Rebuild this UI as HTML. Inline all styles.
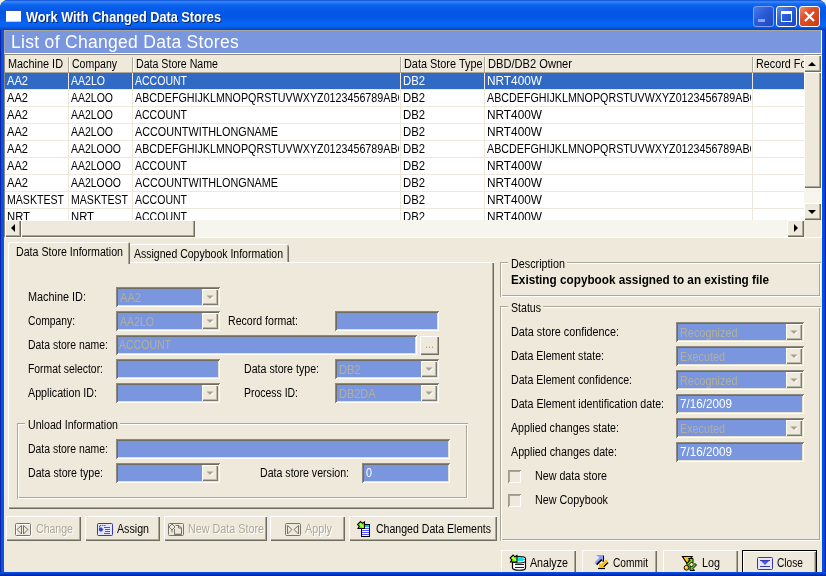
<!DOCTYPE html><html><head><meta charset="utf-8"><title>Work With Changed Data Stores</title><style>
html,body{margin:0;padding:0;}
body{width:826px;height:576px;overflow:hidden;position:relative;background:#EEE9DB;font-family:"Liberation Sans", sans-serif;font-size:11px;}
#w{position:absolute;left:0;top:0;width:826px;height:576px;overflow:hidden;will-change:transform;}
#w div,#w span,#w svg{position:absolute;box-sizing:border-box;}
.t{white-space:pre;line-height:1.15;transform-origin:0 0;}
</style></head><body><div id="w">
<div style="left:0px;top:0px;width:826px;height:576px;background:#f2efe4;"></div>
<div style="left:0px;top:0px;width:826px;height:576px;background:#0a26b0;border-radius:8px 8px 0 0;"></div>
<div style="left:1px;top:0px;width:824px;height:576px;background:linear-gradient(to right,#0d4fe0 0px,#0855e4 3px,#0855e4 821px,#0a3fd0 824px);border-radius:8px 8px 0 0;"></div>
<div style="left:0px;top:0px;width:826px;height:30px;background:linear-gradient(to bottom,#0b48d0 0%,#3b8df8 6%,#1a6ef2 11%,#0860ec 20%,#0457e6 40%,#0458e6 60%,#0864f2 75%,#0763f0 88%,#0450d8 95%,#0340c0 100%);border-radius:8px 8px 0 0;"></div>
<div style="left:4px;top:30px;width:818px;height:542px;background:#EEE9DB;"></div>
<div style="left:6px;top:10px;width:15px;height:12px;background:#fff;border-top:1px solid #2a50c0;border-bottom:1px solid #b8c8f0;"></div>
<span class="t" style="left:26px;top:9px;font-size:14px;font-weight:bold;color:#fff;transform:scaleX(0.9099);text-shadow:1px 1px 0 #0a246a;">Work With Changed Data Stores</span>
<div style="left:753px;top:6px;width:21px;height:21px;background:linear-gradient(135deg,#4a7be6 0%,#2a5ad8 45%,#2148c2 100%);border:1px solid #7f9ff0;border-radius:3px;"></div>
<div style="left:776px;top:6px;width:21px;height:21px;background:linear-gradient(135deg,#5a8cf0 0%,#2a5ddb 45%,#1f45c0 100%);border:1px solid #fff;border-radius:3px;"></div>
<div style="left:799px;top:6px;width:21px;height:21px;background:linear-gradient(135deg,#ee9070 0%,#e2502b 35%,#cc3a10 100%);border:1px solid #fff;border-radius:3px;"></div>
<svg style="left:753px;top:6px" width="21" height="21"><rect x="5" y="13" width="7" height="3" fill="#8aa3ee"/></svg>
<svg style="left:776px;top:6px" width="21" height="21"><path d="M5 5h11v11h-11z M6 8v7h9v-7z" fill="#fff" fill-rule="evenodd"/></svg>
<svg style="left:799px;top:6px" width="21" height="21"><path d="M6 6l9 9M15 6l-9 9" stroke="#fff" stroke-width="2.2" fill="none"/></svg>
<div style="left:4px;top:30px;width:818px;height:24px;background:#7A96DF;border-top:1px solid #aca899;border-bottom:1px solid #fff;border-left:1px solid #aca899;border-right:1px solid #fff;"></div>
<span class="t" style="left:11px;top:32px;font-size:17.5px;color:#fff;letter-spacing:0.302px;">List of Changed Data Stores</span>
<div style="left:4px;top:54px;width:818px;height:184px;background:#fff;border-top:1px solid #8d8a7c;border-left:1px solid #8d8a7c;border-right:1px solid #fff;border-bottom:1px solid #fff;"></div>
<div style="left:5px;top:55px;width:799px;height:18px;background:#EEE9DB;border-bottom:1px solid #aca899;"></div>
<span class="t" style="left:8px;top:58px;font-size:12px;transform:scaleX(0.9060);">Machine ID</span>
<div style="left:68px;top:57px;width:2px;height:15px;border-left:1px solid #aca899;border-right:1px solid #fff;"></div>
<span class="t" style="left:72px;top:58px;font-size:12px;transform:scaleX(0.8762);">Company</span>
<div style="left:132px;top:57px;width:2px;height:15px;border-left:1px solid #aca899;border-right:1px solid #fff;"></div>
<span class="t" style="left:136px;top:58px;font-size:12px;transform:scaleX(0.8844);">Data Store Name</span>
<div style="left:400px;top:57px;width:2px;height:15px;border-left:1px solid #aca899;border-right:1px solid #fff;"></div>
<span class="t" style="left:404px;top:58px;font-size:12px;transform:scaleX(0.9075);">Data Store Type</span>
<div style="left:484px;top:57px;width:2px;height:15px;border-left:1px solid #aca899;border-right:1px solid #fff;"></div>
<span class="t" style="left:488px;top:58px;font-size:12px;transform:scaleX(0.9261);">DBD/DB2 Owner</span>
<div style="left:752px;top:57px;width:2px;height:15px;border-left:1px solid #aca899;border-right:1px solid #fff;"></div>
<div style="left:756px;top:58px;width:48px;height:14px;overflow:hidden;"><span class="t" style="left:0px;top:0px;font-size:12px;transform:scaleX(0.8996);">Record Format</span></div>
<div style="left:5px;top:73px;width:799px;height:16px;background:#316AC5;"></div>
<div style="left:5px;top:89px;width:799px;height:1px;background:#ede8db;"></div>
<div style="left:7px;top:74px;width:60px;height:16px;overflow:hidden;"><span class="t" style="left:0px;top:0px;font-size:12.3px;color:#fff;transform:scaleX(0.9032);">AA2</span></div>
<div style="left:71px;top:74px;width:60px;height:16px;overflow:hidden;"><span class="t" style="left:0px;top:0px;font-size:12.3px;color:#fff;transform:scaleX(0.8574);">AA2LO</span></div>
<div style="left:135px;top:74px;width:264px;height:16px;overflow:hidden;"><span class="t" style="left:0px;top:0px;font-size:12.3px;color:#fff;transform:scaleX(0.8551);">ACCOUNT</span></div>
<div style="left:403px;top:74px;width:80px;height:16px;overflow:hidden;"><span class="t" style="left:0px;top:0px;font-size:12.3px;color:#fff;transform:scaleX(0.9197);">DB2</span></div>
<div style="left:487px;top:74px;width:264px;height:16px;overflow:hidden;"><span class="t" style="left:0px;top:0px;font-size:12.3px;color:#fff;transform:scaleX(0.9617);">NRT400W</span></div>
<div style="left:5px;top:106px;width:799px;height:1px;background:#ede8db;"></div>
<div style="left:7px;top:91px;width:60px;height:16px;overflow:hidden;"><span class="t" style="left:0px;top:0px;font-size:12.3px;transform:scaleX(0.9032);">AA2</span></div>
<div style="left:71px;top:91px;width:60px;height:16px;overflow:hidden;"><span class="t" style="left:0px;top:0px;font-size:12.3px;transform:scaleX(0.8533);">AA2LOO</span></div>
<div style="left:135px;top:91px;width:264px;height:16px;overflow:hidden;"><span class="t" style="left:0px;top:0px;font-size:12.3px;transform:scaleX(0.8711);">ABCDEFGHIJKLMNOPQRSTUVWXYZ0123456789ABCD</span></div>
<div style="left:403px;top:91px;width:80px;height:16px;overflow:hidden;"><span class="t" style="left:0px;top:0px;font-size:12.3px;transform:scaleX(0.9197);">DB2</span></div>
<div style="left:487px;top:91px;width:264px;height:16px;overflow:hidden;"><span class="t" style="left:0px;top:0px;font-size:12.3px;transform:scaleX(0.8711);">ABCDEFGHIJKLMNOPQRSTUVWXYZ0123456789ABCD</span></div>
<div style="left:5px;top:123px;width:799px;height:1px;background:#ede8db;"></div>
<div style="left:7px;top:108px;width:60px;height:16px;overflow:hidden;"><span class="t" style="left:0px;top:0px;font-size:12.3px;transform:scaleX(0.9032);">AA2</span></div>
<div style="left:71px;top:108px;width:60px;height:16px;overflow:hidden;"><span class="t" style="left:0px;top:0px;font-size:12.3px;transform:scaleX(0.8533);">AA2LOO</span></div>
<div style="left:135px;top:108px;width:264px;height:16px;overflow:hidden;"><span class="t" style="left:0px;top:0px;font-size:12.3px;transform:scaleX(0.8551);">ACCOUNT</span></div>
<div style="left:403px;top:108px;width:80px;height:16px;overflow:hidden;"><span class="t" style="left:0px;top:0px;font-size:12.3px;transform:scaleX(0.9197);">DB2</span></div>
<div style="left:487px;top:108px;width:264px;height:16px;overflow:hidden;"><span class="t" style="left:0px;top:0px;font-size:12.3px;transform:scaleX(0.9617);">NRT400W</span></div>
<div style="left:5px;top:140px;width:799px;height:1px;background:#ede8db;"></div>
<div style="left:7px;top:125px;width:60px;height:16px;overflow:hidden;"><span class="t" style="left:0px;top:0px;font-size:12.3px;transform:scaleX(0.9032);">AA2</span></div>
<div style="left:71px;top:125px;width:60px;height:16px;overflow:hidden;"><span class="t" style="left:0px;top:0px;font-size:12.3px;transform:scaleX(0.8533);">AA2LOO</span></div>
<div style="left:135px;top:125px;width:264px;height:16px;overflow:hidden;"><span class="t" style="left:0px;top:0px;font-size:12.3px;transform:scaleX(0.8795);">ACCOUNTWITHLONGNAME</span></div>
<div style="left:403px;top:125px;width:80px;height:16px;overflow:hidden;"><span class="t" style="left:0px;top:0px;font-size:12.3px;transform:scaleX(0.9197);">DB2</span></div>
<div style="left:487px;top:125px;width:264px;height:16px;overflow:hidden;"><span class="t" style="left:0px;top:0px;font-size:12.3px;transform:scaleX(0.9617);">NRT400W</span></div>
<div style="left:5px;top:157px;width:799px;height:1px;background:#ede8db;"></div>
<div style="left:7px;top:142px;width:60px;height:16px;overflow:hidden;"><span class="t" style="left:0px;top:0px;font-size:12.3px;transform:scaleX(0.9032);">AA2</span></div>
<div style="left:71px;top:142px;width:60px;height:16px;overflow:hidden;"><span class="t" style="left:0px;top:0px;font-size:12.3px;transform:scaleX(0.8506);">AA2LOOO</span></div>
<div style="left:135px;top:142px;width:264px;height:16px;overflow:hidden;"><span class="t" style="left:0px;top:0px;font-size:12.3px;transform:scaleX(0.8711);">ABCDEFGHIJKLMNOPQRSTUVWXYZ0123456789ABCD</span></div>
<div style="left:403px;top:142px;width:80px;height:16px;overflow:hidden;"><span class="t" style="left:0px;top:0px;font-size:12.3px;transform:scaleX(0.9197);">DB2</span></div>
<div style="left:487px;top:142px;width:264px;height:16px;overflow:hidden;"><span class="t" style="left:0px;top:0px;font-size:12.3px;transform:scaleX(0.8711);">ABCDEFGHIJKLMNOPQRSTUVWXYZ0123456789ABCD</span></div>
<div style="left:5px;top:174px;width:799px;height:1px;background:#ede8db;"></div>
<div style="left:7px;top:159px;width:60px;height:16px;overflow:hidden;"><span class="t" style="left:0px;top:0px;font-size:12.3px;transform:scaleX(0.9032);">AA2</span></div>
<div style="left:71px;top:159px;width:60px;height:16px;overflow:hidden;"><span class="t" style="left:0px;top:0px;font-size:12.3px;transform:scaleX(0.8506);">AA2LOOO</span></div>
<div style="left:135px;top:159px;width:264px;height:16px;overflow:hidden;"><span class="t" style="left:0px;top:0px;font-size:12.3px;transform:scaleX(0.8551);">ACCOUNT</span></div>
<div style="left:403px;top:159px;width:80px;height:16px;overflow:hidden;"><span class="t" style="left:0px;top:0px;font-size:12.3px;transform:scaleX(0.9197);">DB2</span></div>
<div style="left:487px;top:159px;width:264px;height:16px;overflow:hidden;"><span class="t" style="left:0px;top:0px;font-size:12.3px;transform:scaleX(0.9617);">NRT400W</span></div>
<div style="left:5px;top:191px;width:799px;height:1px;background:#ede8db;"></div>
<div style="left:7px;top:176px;width:60px;height:16px;overflow:hidden;"><span class="t" style="left:0px;top:0px;font-size:12.3px;transform:scaleX(0.9032);">AA2</span></div>
<div style="left:71px;top:176px;width:60px;height:16px;overflow:hidden;"><span class="t" style="left:0px;top:0px;font-size:12.3px;transform:scaleX(0.8506);">AA2LOOO</span></div>
<div style="left:135px;top:176px;width:264px;height:16px;overflow:hidden;"><span class="t" style="left:0px;top:0px;font-size:12.3px;transform:scaleX(0.8795);">ACCOUNTWITHLONGNAME</span></div>
<div style="left:403px;top:176px;width:80px;height:16px;overflow:hidden;"><span class="t" style="left:0px;top:0px;font-size:12.3px;transform:scaleX(0.9197);">DB2</span></div>
<div style="left:487px;top:176px;width:264px;height:16px;overflow:hidden;"><span class="t" style="left:0px;top:0px;font-size:12.3px;transform:scaleX(0.9617);">NRT400W</span></div>
<div style="left:5px;top:208px;width:799px;height:1px;background:#ede8db;"></div>
<div style="left:7px;top:193px;width:60px;height:16px;overflow:hidden;"><span class="t" style="left:0px;top:0px;font-size:12.3px;transform:scaleX(0.8600);">MASKTEST</span></div>
<div style="left:71px;top:193px;width:60px;height:16px;overflow:hidden;"><span class="t" style="left:0px;top:0px;font-size:12.3px;transform:scaleX(0.8600);">MASKTEST</span></div>
<div style="left:135px;top:193px;width:264px;height:16px;overflow:hidden;"><span class="t" style="left:0px;top:0px;font-size:12.3px;transform:scaleX(0.8551);">ACCOUNT</span></div>
<div style="left:403px;top:193px;width:80px;height:16px;overflow:hidden;"><span class="t" style="left:0px;top:0px;font-size:12.3px;transform:scaleX(0.9197);">DB2</span></div>
<div style="left:487px;top:193px;width:264px;height:16px;overflow:hidden;"><span class="t" style="left:0px;top:0px;font-size:12.3px;transform:scaleX(0.9617);">NRT400W</span></div>
<div style="left:7px;top:210px;width:60px;height:10px;overflow:hidden;"><span class="t" style="left:0px;top:0px;font-size:12.3px;transform:scaleX(0.9177);">NRT</span></div>
<div style="left:71px;top:210px;width:60px;height:10px;overflow:hidden;"><span class="t" style="left:0px;top:0px;font-size:12.3px;transform:scaleX(0.9177);">NRT</span></div>
<div style="left:135px;top:210px;width:264px;height:10px;overflow:hidden;"><span class="t" style="left:0px;top:0px;font-size:12.3px;transform:scaleX(0.8551);">ACCOUNT</span></div>
<div style="left:403px;top:210px;width:80px;height:10px;overflow:hidden;"><span class="t" style="left:0px;top:0px;font-size:12.3px;transform:scaleX(0.9197);">DB2</span></div>
<div style="left:487px;top:210px;width:264px;height:10px;overflow:hidden;"><span class="t" style="left:0px;top:0px;font-size:12.3px;transform:scaleX(0.9617);">NRT400W</span></div>
<div style="left:68px;top:73px;width:1px;height:147px;background:#ede8db;"></div>
<div style="left:132px;top:73px;width:1px;height:147px;background:#ede8db;"></div>
<div style="left:400px;top:73px;width:1px;height:147px;background:#ede8db;"></div>
<div style="left:484px;top:73px;width:1px;height:147px;background:#ede8db;"></div>
<div style="left:752px;top:73px;width:1px;height:147px;background:#ede8db;"></div>
<div style="left:804px;top:55px;width:17px;height:165px;background:#f6f5ee;"></div>
<div style="left:804px;top:55px;width:17px;height:17px;background:#EEE9DB;box-shadow:inset 1px 1px 0 #fff, inset -1px -1px 0 #6f6d62, inset -2px -2px 0 #aca899;"></div>
<div style="left:804px;top:72px;width:17px;height:116px;background:#EEE9DB;box-shadow:inset 1px 1px 0 #fff, inset -1px -1px 0 #6f6d62, inset -2px -2px 0 #aca899;"></div>
<div style="left:804px;top:203px;width:17px;height:17px;background:#EEE9DB;box-shadow:inset 1px 1px 0 #fff, inset -1px -1px 0 #6f6d62, inset -2px -2px 0 #aca899;"></div>
<svg style="left:808px;top:60.5px" width="9" height="5"><path d="M0 5h8l-4 -4z" fill="#000"/></svg>
<svg style="left:808px;top:209.5px" width="9" height="5"><path d="M0 0h8l-4 4z" fill="#000"/></svg>
<div style="left:5px;top:220px;width:799px;height:17px;background:#f6f5ee;"></div>
<div style="left:804px;top:220px;width:17px;height:17px;background:#EEE9DB;"></div>
<div style="left:5px;top:220px;width:16px;height:17px;background:#EEE9DB;box-shadow:inset 1px 1px 0 #fff, inset -1px -1px 0 #6f6d62, inset -2px -2px 0 #aca899;"></div>
<div style="left:21px;top:220px;width:174px;height:17px;background:#EEE9DB;box-shadow:inset 1px 1px 0 #fff, inset -1px -1px 0 #6f6d62, inset -2px -2px 0 #aca899;"></div>
<div style="left:787px;top:220px;width:17px;height:17px;background:#EEE9DB;box-shadow:inset 1px 1px 0 #fff, inset -1px -1px 0 #6f6d62, inset -2px -2px 0 #aca899;"></div>
<svg style="left:10px;top:224px" width="5" height="9"><path d="M5 0v8l-4 -4z" fill="#000"/></svg>
<svg style="left:793.5px;top:224px" width="5" height="9"><path d="M0 0v8l4 -4z" fill="#000"/></svg>
<div style="left:8px;top:262px;width:486px;height:247px;box-shadow:inset 1px 1px 0 #fff, inset -1px -1px 0 #6f6d62, inset -2px -2px 0 #aca899;"></div>
<div style="left:8px;top:242px;width:122px;height:22px;background:#EEE9DB;box-shadow:inset 1px 1px 0 #fff, inset -1px 0 0 #6f6d62, inset -2px 0 0 #aca899;border-radius:2px 2px 0 0;"></div>
<span class="t" style="left:16px;top:246px;font-size:12px;transform:scaleX(0.8862);">Data Store Information</span>
<div style="left:130px;top:244px;width:159px;height:18px;background:#EEE9DB;box-shadow:inset 0 1px 0 #fff, inset -1px 0 0 #6f6d62, inset -2px 0 0 #aca899;border-radius:2px 2px 0 0;"></div>
<span class="t" style="left:134px;top:248px;font-size:12px;transform:scaleX(0.8759);">Assigned Copybook Information</span>
<span class="t" style="left:28px;top:291px;font-size:12px;transform:scaleX(0.9058);">Machine ID:</span>
<div style="left:116px;top:287px;width:104px;height:20px;background:#7A96DF;box-shadow:inset 1px 1px 0 #8d8a7c, inset -1px -1px 0 #fff, inset 2px 2px 0 #6f6d62, inset -2px -2px 0 #e4e1d0;"></div>
<div style="left:202px;top:289px;width:16px;height:16px;background:#EEE9DB;box-shadow:inset 1px 1px 0 #fff, inset -1px -1px 0 #7d7a6d, inset -2px -2px 0 #bdb9a8;"></div>
<svg style="left:206px;top:295px" width="10" height="6" viewBox="0 0 10 6"><path d="M1.5 1.5h7l-3.5 3.5z" fill="#fff"/><path d="M0.5 0.5h7l-3.5 3.5z" fill="#a5a292"/></svg>
<span class="t" style="left:120px;top:292px;font-size:12px;color:#b2af9e;transform:scaleX(0.9256);">AA2</span>
<span class="t" style="left:28px;top:315px;font-size:12px;transform:scaleX(0.8592);">Company:</span>
<div style="left:116px;top:311px;width:104px;height:20px;background:#7A96DF;box-shadow:inset 1px 1px 0 #8d8a7c, inset -1px -1px 0 #fff, inset 2px 2px 0 #6f6d62, inset -2px -2px 0 #e4e1d0;"></div>
<div style="left:202px;top:313px;width:16px;height:16px;background:#EEE9DB;box-shadow:inset 1px 1px 0 #fff, inset -1px -1px 0 #7d7a6d, inset -2px -2px 0 #bdb9a8;"></div>
<svg style="left:206px;top:319px" width="10" height="6" viewBox="0 0 10 6"><path d="M1.5 1.5h7l-3.5 3.5z" fill="#fff"/><path d="M0.5 0.5h7l-3.5 3.5z" fill="#a5a292"/></svg>
<span class="t" style="left:120px;top:316px;font-size:12px;color:#b2af9e;transform:scaleX(0.8785);">AA2LO</span>
<span class="t" style="left:228px;top:315px;font-size:12px;transform:scaleX(0.8821);">Record format:</span>
<div style="left:335px;top:311px;width:104px;height:20px;background:#7A96DF;box-shadow:inset 1px 1px 0 #8d8a7c, inset -1px -1px 0 #fff, inset 2px 2px 0 #6f6d62, inset -2px -2px 0 #e4e1d0;"></div>
<span class="t" style="left:28px;top:339px;font-size:12px;transform:scaleX(0.8691);">Data store name:</span>
<div style="left:116px;top:335px;width:301px;height:20px;background:#7A96DF;box-shadow:inset 1px 1px 0 #8d8a7c, inset -1px -1px 0 #fff, inset 2px 2px 0 #6f6d62, inset -2px -2px 0 #e4e1d0;"></div>
<span class="t" style="left:119px;top:339px;font-size:12px;color:#b2af9e;transform:scaleX(0.8763);">ACCOUNT</span>
<div style="left:420px;top:336px;width:19px;height:19px;background:#EEE9DB;box-shadow:inset 1px 1px 0 #fff, inset -1px -1px 0 #6f6d62, inset -2px -2px 0 #aca899;"></div>
<span class="t" style="left:425px;top:338px;font-size:12px;color:#aca899;transform:scaleX(0.8986);">...</span>
<span class="t" style="left:28px;top:363px;font-size:12px;transform:scaleX(0.8650);">Format selector:</span>
<div style="left:116px;top:359px;width:104px;height:20px;background:#7A96DF;box-shadow:inset 1px 1px 0 #8d8a7c, inset -1px -1px 0 #fff, inset 2px 2px 0 #6f6d62, inset -2px -2px 0 #e4e1d0;"></div>
<span class="t" style="left:244px;top:363px;font-size:12px;transform:scaleX(0.8853);">Data store type:</span>
<div style="left:335px;top:359px;width:104px;height:20px;background:#7A96DF;box-shadow:inset 1px 1px 0 #8d8a7c, inset -1px -1px 0 #fff, inset 2px 2px 0 #6f6d62, inset -2px -2px 0 #e4e1d0;"></div>
<div style="left:421px;top:361px;width:16px;height:16px;background:#EEE9DB;box-shadow:inset 1px 1px 0 #fff, inset -1px -1px 0 #7d7a6d, inset -2px -2px 0 #bdb9a8;"></div>
<svg style="left:425px;top:367px" width="10" height="6" viewBox="0 0 10 6"><path d="M1.5 1.5h7l-3.5 3.5z" fill="#fff"/><path d="M0.5 0.5h7l-3.5 3.5z" fill="#a5a292"/></svg>
<span class="t" style="left:339px;top:364px;font-size:12px;color:#b2af9e;transform:scaleX(0.9210);">DB2</span>
<span class="t" style="left:28px;top:387px;font-size:12px;transform:scaleX(0.8918);">Application ID:</span>
<div style="left:116px;top:383px;width:104px;height:20px;background:#7A96DF;box-shadow:inset 1px 1px 0 #8d8a7c, inset -1px -1px 0 #fff, inset 2px 2px 0 #6f6d62, inset -2px -2px 0 #e4e1d0;"></div>
<div style="left:202px;top:385px;width:16px;height:16px;background:#EEE9DB;box-shadow:inset 1px 1px 0 #fff, inset -1px -1px 0 #7d7a6d, inset -2px -2px 0 #bdb9a8;"></div>
<svg style="left:206px;top:391px" width="10" height="6" viewBox="0 0 10 6"><path d="M1.5 1.5h7l-3.5 3.5z" fill="#fff"/><path d="M0.5 0.5h7l-3.5 3.5z" fill="#a5a292"/></svg>
<span class="t" style="left:244px;top:387px;font-size:12px;transform:scaleX(0.8707);">Process ID:</span>
<div style="left:335px;top:383px;width:104px;height:20px;background:#7A96DF;box-shadow:inset 1px 1px 0 #8d8a7c, inset -1px -1px 0 #fff, inset 2px 2px 0 #6f6d62, inset -2px -2px 0 #e4e1d0;"></div>
<div style="left:421px;top:385px;width:16px;height:16px;background:#EEE9DB;box-shadow:inset 1px 1px 0 #fff, inset -1px -1px 0 #7d7a6d, inset -2px -2px 0 #bdb9a8;"></div>
<svg style="left:425px;top:391px" width="10" height="6" viewBox="0 0 10 6"><path d="M1.5 1.5h7l-3.5 3.5z" fill="#fff"/><path d="M0.5 0.5h7l-3.5 3.5z" fill="#a5a292"/></svg>
<span class="t" style="left:339px;top:388px;font-size:12px;color:#b2af9e;transform:scaleX(0.9121);">DB2DA</span>
<div style="left:17px;top:423px;width:451px;height:76px;box-shadow:inset 1px 1px 0 #aca899, inset -1px -1px 0 #fff, inset 2px 2px 0 #fff, inset -2px -2px 0 #aca899;"></div>
<div style="left:25px;top:423px;width:95px;height:2px;background:#EEE9DB;"></div>
<span class="t" style="left:28px;top:419px;font-size:12px;transform:scaleX(0.8877);">Unload Information</span>
<span class="t" style="left:28px;top:443px;font-size:12px;transform:scaleX(0.8691);">Data store name:</span>
<div style="left:116px;top:439px;width:334px;height:20px;background:#7A96DF;box-shadow:inset 1px 1px 0 #8d8a7c, inset -1px -1px 0 #fff, inset 2px 2px 0 #6f6d62, inset -2px -2px 0 #e4e1d0;"></div>
<span class="t" style="left:28px;top:467px;font-size:12px;transform:scaleX(0.8853);">Data store type:</span>
<div style="left:116px;top:463px;width:104px;height:20px;background:#7A96DF;box-shadow:inset 1px 1px 0 #8d8a7c, inset -1px -1px 0 #fff, inset 2px 2px 0 #6f6d62, inset -2px -2px 0 #e4e1d0;"></div>
<div style="left:202px;top:465px;width:16px;height:16px;background:#EEE9DB;box-shadow:inset 1px 1px 0 #fff, inset -1px -1px 0 #7d7a6d, inset -2px -2px 0 #bdb9a8;"></div>
<svg style="left:206px;top:471px" width="10" height="6" viewBox="0 0 10 6"><path d="M1.5 1.5h7l-3.5 3.5z" fill="#fff"/><path d="M0.5 0.5h7l-3.5 3.5z" fill="#a5a292"/></svg>
<span class="t" style="left:260px;top:467px;font-size:12px;transform:scaleX(0.8836);">Data store version:</span>
<div style="left:362px;top:463px;width:88px;height:20px;background:#7A96DF;box-shadow:inset 1px 1px 0 #8d8a7c, inset -1px -1px 0 #fff, inset 2px 2px 0 #6f6d62, inset -2px -2px 0 #e4e1d0;"></div>
<span class="t" style="left:366px;top:467px;font-size:12px;color:#fff;transform:scaleX(0.8972);">0</span>
<div style="left:500px;top:262px;width:321px;height:35px;box-shadow:inset 1px 1px 0 #aca899, inset -1px -1px 0 #fff, inset 2px 2px 0 #fff, inset -2px -2px 0 #aca899;"></div>
<div style="left:508px;top:262px;width:59px;height:2px;background:#EEE9DB;"></div>
<span class="t" style="left:511px;top:258px;font-size:12px;transform:scaleX(0.8995);">Description</span>
<span class="t" style="left:511px;top:273px;font-size:13px;font-weight:bold;transform:scaleX(0.9042);">Existing copybook assigned to an existing file</span>
<div style="left:500px;top:306px;width:321px;height:235px;box-shadow:inset 1px 1px 0 #aca899, inset -1px -1px 0 #fff, inset 2px 2px 0 #fff, inset -2px -2px 0 #aca899;"></div>
<div style="left:508px;top:306px;width:35px;height:2px;background:#EEE9DB;"></div>
<span class="t" style="left:511px;top:302px;font-size:12px;transform:scaleX(0.8815);">Status</span>
<span class="t" style="left:511px;top:326px;font-size:12px;transform:scaleX(0.8994);">Data store confidence:</span>
<div style="left:676px;top:322px;width:128px;height:20px;background:#7A96DF;box-shadow:inset 1px 1px 0 #8d8a7c, inset -1px -1px 0 #fff, inset 2px 2px 0 #6f6d62, inset -2px -2px 0 #e4e1d0;"></div>
<div style="left:786px;top:324px;width:16px;height:16px;background:#EEE9DB;box-shadow:inset 1px 1px 0 #fff, inset -1px -1px 0 #7d7a6d, inset -2px -2px 0 #bdb9a8;"></div>
<svg style="left:790px;top:330px" width="10" height="6" viewBox="0 0 10 6"><path d="M1.5 1.5h7l-3.5 3.5z" fill="#fff"/><path d="M0.5 0.5h7l-3.5 3.5z" fill="#a5a292"/></svg>
<span class="t" style="left:680px;top:327px;font-size:12px;color:#b2af9e;transform:scaleX(0.9073);">Recognized</span>
<span class="t" style="left:511px;top:350px;font-size:12px;transform:scaleX(0.8824);">Data Element state:</span>
<div style="left:676px;top:346px;width:128px;height:20px;background:#7A96DF;box-shadow:inset 1px 1px 0 #8d8a7c, inset -1px -1px 0 #fff, inset 2px 2px 0 #6f6d62, inset -2px -2px 0 #e4e1d0;"></div>
<div style="left:786px;top:348px;width:16px;height:16px;background:#EEE9DB;box-shadow:inset 1px 1px 0 #fff, inset -1px -1px 0 #7d7a6d, inset -2px -2px 0 #bdb9a8;"></div>
<svg style="left:790px;top:354px" width="10" height="6" viewBox="0 0 10 6"><path d="M1.5 1.5h7l-3.5 3.5z" fill="#fff"/><path d="M0.5 0.5h7l-3.5 3.5z" fill="#a5a292"/></svg>
<span class="t" style="left:680px;top:351px;font-size:12px;color:#b2af9e;transform:scaleX(0.8992);">Executed</span>
<span class="t" style="left:511px;top:374px;font-size:12px;transform:scaleX(0.8805);">Data Element confidence:</span>
<div style="left:676px;top:370px;width:128px;height:20px;background:#7A96DF;box-shadow:inset 1px 1px 0 #8d8a7c, inset -1px -1px 0 #fff, inset 2px 2px 0 #6f6d62, inset -2px -2px 0 #e4e1d0;"></div>
<div style="left:786px;top:372px;width:16px;height:16px;background:#EEE9DB;box-shadow:inset 1px 1px 0 #fff, inset -1px -1px 0 #7d7a6d, inset -2px -2px 0 #bdb9a8;"></div>
<svg style="left:790px;top:378px" width="10" height="6" viewBox="0 0 10 6"><path d="M1.5 1.5h7l-3.5 3.5z" fill="#fff"/><path d="M0.5 0.5h7l-3.5 3.5z" fill="#a5a292"/></svg>
<span class="t" style="left:680px;top:375px;font-size:12px;color:#b2af9e;transform:scaleX(0.9073);">Recognized</span>
<span class="t" style="left:511px;top:398px;font-size:12px;transform:scaleX(0.8855);">Data Element identification date:</span>
<div style="left:676px;top:394px;width:128px;height:20px;background:#7A96DF;box-shadow:inset 1px 1px 0 #8d8a7c, inset -1px -1px 0 #fff, inset 2px 2px 0 #6f6d62, inset -2px -2px 0 #e4e1d0;"></div>
<span class="t" style="left:680px;top:398px;font-size:12px;color:#fff;transform:scaleX(0.9740);">7/16/2009</span>
<span class="t" style="left:511px;top:422px;font-size:12px;transform:scaleX(0.8895);">Applied changes state:</span>
<div style="left:676px;top:418px;width:128px;height:20px;background:#7A96DF;box-shadow:inset 1px 1px 0 #8d8a7c, inset -1px -1px 0 #fff, inset 2px 2px 0 #6f6d62, inset -2px -2px 0 #e4e1d0;"></div>
<div style="left:786px;top:420px;width:16px;height:16px;background:#EEE9DB;box-shadow:inset 1px 1px 0 #fff, inset -1px -1px 0 #7d7a6d, inset -2px -2px 0 #bdb9a8;"></div>
<svg style="left:790px;top:426px" width="10" height="6" viewBox="0 0 10 6"><path d="M1.5 1.5h7l-3.5 3.5z" fill="#fff"/><path d="M0.5 0.5h7l-3.5 3.5z" fill="#a5a292"/></svg>
<span class="t" style="left:680px;top:423px;font-size:12px;color:#b2af9e;transform:scaleX(0.8992);">Executed</span>
<span class="t" style="left:511px;top:446px;font-size:12px;transform:scaleX(0.8925);">Applied changes date:</span>
<div style="left:676px;top:442px;width:128px;height:20px;background:#7A96DF;box-shadow:inset 1px 1px 0 #8d8a7c, inset -1px -1px 0 #fff, inset 2px 2px 0 #6f6d62, inset -2px -2px 0 #e4e1d0;"></div>
<span class="t" style="left:680px;top:446px;font-size:12px;color:#fff;transform:scaleX(0.9740);">7/16/2009</span>
<div style="left:508px;top:470px;width:13px;height:13px;background:#EEE9DB;box-shadow:inset 1px 1px 0 #9d9a8c, inset -1px -1px 0 #fff, inset 2px 2px 0 #a8a598;"></div>
<span class="t" style="left:535px;top:470px;font-size:12px;transform:scaleX(0.8920);">New data store</span>
<div style="left:508px;top:494px;width:13px;height:13px;background:#EEE9DB;box-shadow:inset 1px 1px 0 #9d9a8c, inset -1px -1px 0 #fff, inset 2px 2px 0 #a8a598;"></div>
<span class="t" style="left:535px;top:494px;font-size:12px;transform:scaleX(0.8971);">New Copybook</span>
<div style="left:6px;top:516px;width:75px;height:25px;background:#EEE9DB;box-shadow:inset 1px 1px 0 #fff, inset -1px -1px 0 #6f6d62, inset -2px -2px 0 #aca899;"></div>
<span class="t" style="left:37px;top:524px;font-size:12px;color:#fff;transform:scaleX(0.8800);">Change</span>
<span class="t" style="left:36px;top:523px;font-size:12px;color:#aca899;transform:scaleX(0.8800);">Change</span>
<div style="left:85px;top:516px;width:75px;height:25px;background:#EEE9DB;box-shadow:inset 1px 1px 0 #fff, inset -1px -1px 0 #6f6d62, inset -2px -2px 0 #aca899;"></div>
<span class="t" style="left:117px;top:523px;font-size:12px;transform:scaleX(0.8881);">Assign</span>
<div style="left:164px;top:516px;width:103px;height:25px;background:#EEE9DB;box-shadow:inset 1px 1px 0 #fff, inset -1px -1px 0 #6f6d62, inset -2px -2px 0 #aca899;"></div>
<span class="t" style="left:189px;top:524px;font-size:12px;color:#fff;transform:scaleX(0.8973);">New Data Store</span>
<span class="t" style="left:188px;top:523px;font-size:12px;color:#aca899;transform:scaleX(0.8973);">New Data Store</span>
<div style="left:270px;top:516px;width:75px;height:25px;background:#EEE9DB;box-shadow:inset 1px 1px 0 #fff, inset -1px -1px 0 #6f6d62, inset -2px -2px 0 #aca899;"></div>
<span class="t" style="left:306px;top:524px;font-size:12px;color:#fff;transform:scaleX(0.8991);">Apply</span>
<span class="t" style="left:305px;top:523px;font-size:12px;color:#aca899;transform:scaleX(0.8991);">Apply</span>
<div style="left:349px;top:516px;width:148px;height:25px;background:#EEE9DB;box-shadow:inset 1px 1px 0 #fff, inset -1px -1px 0 #6f6d62, inset -2px -2px 0 #aca899;"></div>
<span class="t" style="left:376px;top:523px;font-size:12px;transform:scaleX(0.8795);">Changed Data Elements</span>
<div style="left:501px;top:550px;width:75px;height:26px;background:#EEE9DB;box-shadow:inset 1px 1px 0 #fff, inset -1px -1px 0 #6f6d62, inset -2px -2px 0 #aca899;"></div>
<span class="t" style="left:530px;top:557px;font-size:12px;transform:scaleX(0.8899);">Analyze</span>
<div style="left:582px;top:550px;width:75px;height:26px;background:#EEE9DB;box-shadow:inset 1px 1px 0 #fff, inset -1px -1px 0 #6f6d62, inset -2px -2px 0 #aca899;"></div>
<span class="t" style="left:613px;top:557px;font-size:12px;transform:scaleX(0.8466);">Commit</span>
<div style="left:663px;top:550px;width:75px;height:26px;background:#EEE9DB;box-shadow:inset 1px 1px 0 #fff, inset -1px -1px 0 #6f6d62, inset -2px -2px 0 #aca899;"></div>
<span class="t" style="left:702px;top:557px;font-size:12px;transform:scaleX(0.8986);">Log</span>
<div style="left:742px;top:550px;width:75px;height:26px;background:#EEE9DB;box-shadow:inset 0 0 0 1px #000, inset 2px 2px 0 #fff, inset -2px -2px 0 #7d7a6d, inset -3px -3px 0 #bdb9a8;"></div>
<span class="t" style="left:777px;top:557px;font-size:12px;transform:scaleX(0.8473);">Close</span>
<svg style="left:15px;top:523px" width="18" height="15" viewBox="0 0 18 15"><g fill="none" stroke="#fff" stroke-width="1" transform="translate(1,1)"><rect x="0.5" y="0.5" width="15" height="12" rx="1"/></g><g fill="none" stroke="#76746c" stroke-width="1"><rect x="0.5" y="0.5" width="15" height="12" rx="1"/><path d="M6.5 2.5v8.5l-4.5 -4.5z M8.5 2.5v8.5l4.5 -4.5z" stroke-linejoin="miter"/></g></svg>
<svg style="left:97px;top:523px" width="16" height="13" viewBox="0 0 16 13"><rect x="0.5" y="0.5" width="15" height="12" rx="1" fill="#e6e6fb" stroke="#3838b0"/><g stroke="#3a5fd0" stroke-width="1" fill="none"><path d="M2.5 4.5v-2h6" stroke-dasharray="1.5 0.7"/><path d="M7 4.5h6 M8 6.5h5 M8 8.5h5 M7 10.5h6"/></g><path d="M2 5h1.5v-1.5l3 3 -3 3v-1.5h-1.5z" fill="#3448c8"/></svg>
<svg style="left:168px;top:523px" width="18" height="15" viewBox="0 0 18 15"><g fill="none" stroke="#76746c" stroke-width="1"><rect x="0.5" y="0.5" width="15" height="12" rx="1"/><path d="M4 1l3 3 -3 3 -3 -3z M4 7v2.5"/><path d="M7.5 2.5h3.5l2.5 2.5v6.5h-7v-5.5 M10.5 2.5v2.5h3" /><path d="M6.5 11.5h7" stroke-width="1.6"/></g></svg>
<svg style="left:285px;top:523px" width="18" height="15" viewBox="0 0 18 15"><g fill="none" stroke="#76746c" stroke-width="1"><rect x="0.5" y="0.5" width="15" height="12" rx="1"/><path d="M2.5 2.5v8.5l4.5 -4.5z M13.5 2.5v8.5l-4.5 -4.5z"/></g></svg>
<svg style="left:356px;top:520px" width="16" height="18" viewBox="0 0 16 18"><rect x="5.5" y="4.5" width="8" height="12" fill="#fff" stroke="#000"/><rect x="6" y="5" width="7" height="2" fill="#00c8ff"/><path d="M6 8.5h7 M6 10.5h7 M6 12.5h7 M6 14.5h7" stroke="#5a5aff" stroke-width="1"/><path transform="translate(1,1)" d="M3.6 0.6l1.7 1.7 2.2 -1.3v6.5h-6.5l1.3 -2.2 -1.7 -1.7z" fill="#70e800" stroke="#000" stroke-width="1.1" stroke-linejoin="miter"/><path transform="translate(1,1)" d="M3.6 2l-1.6 1.6 3.5 3h1.3v-1.3l-3 -3.5z" fill="#b4ff50"/></svg>
<svg style="left:509px;top:553px" width="19" height="19" viewBox="0 0 19 19"><path d="M3.5 5.5c0 -2.5 13 -2.5 13 0v9.5c0 3 -13 3 -13 0z" fill="#fff" stroke="#000" stroke-width="1.2"/><path d="M3.5 8.5c2 2 11 2 13 0" fill="none" stroke="#000" stroke-width="1"/><path d="M6 11.5h9 M6 14.5h9" stroke="#222" stroke-width="1.2"/><rect x="8.5" y="5" width="6" height="3" fill="#00e0f0"/><rect x="14" y="6" width="2" height="1" fill="#00e0f0"/><path transform="translate(0.5,1.5)" d="M3.6 0.6l1.7 1.7 2.2 -1.3v6.5h-6.5l1.3 -2.2 -1.7 -1.7z" fill="#70e800" stroke="#000" stroke-width="1.1" stroke-linejoin="miter"/><path transform="translate(0.5,1.5)" d="M3.6 2l-1.6 1.6 3.5 3h1.3v-1.3l-3 -3.5z" fill="#b4ff50"/></svg>
<svg style="left:593px;top:554px" width="17" height="17" viewBox="0 0 17 17"><path d="M2.5 9.5l7 -7" stroke="#000" stroke-width="2" transform="translate(1,1)"/><path d="M10.5 1.5v6l-2.5 -1.5" stroke="#000" stroke-width="1" fill="none"/><path d="M1.5 8.5l5 -5 -3.5 -2.5h7v5.5l-2 -1.5 -5 5z" fill="#8c9cf8"/><path d="M5 14.5h7" stroke="#000" stroke-width="1.2"/><path d="M14 7.5l-6 6" stroke="#000" stroke-width="1.5" transform="translate(1,1)"/><path d="M13 5.5l-5 5 -2 -2v5.5h6l-2 -2 5 -4.5z" fill="#ffc000"/></svg>
<svg style="left:681px;top:555px" width="18" height="17" viewBox="0 0 18 17"><path d="M1.5 1.5h9.5l-5 7z" fill="#ffc800" stroke="#000" stroke-width="1.2" stroke-linejoin="miter"/><circle cx="5.5" cy="12.8" r="2.4" fill="#ffb000" stroke="#000" stroke-width="0.9"/><circle cx="5" cy="12.2" r="0.9" fill="#ffe890"/><path d="M5.5 9l3.5 -3.5 -1.5 -2h4.5v5l-1.5 -1.5 -3.5 3.5z" fill="#70f000" stroke="#000" stroke-width="1"/><path d="M15.5 10l-3.5 3.5 1.5 2h-4.5v-5l1.5 1.5 3.5 -3.5z" fill="#50e000" stroke="#000" stroke-width="1"/></svg>
<svg style="left:757px;top:557px" width="16" height="13" viewBox="0 0 16 13"><rect x="0.5" y="0.5" width="15" height="12" rx="1" fill="#e6e6fb" stroke="#3838b0"/><path d="M3 3h10l-5 5z" fill="#4a5ae0"/><path d="M3 3.5h10" stroke="#3838b0"/><path d="M3 9.5h10" stroke="#3838b0" stroke-width="1"/></svg>
<div style="left:0px;top:572px;width:826px;height:4px;background:linear-gradient(to bottom,#0a52e6 0%,#0446d8 30%,#0232b8 65%,#001a90 100%);"></div>
</div></body></html>
